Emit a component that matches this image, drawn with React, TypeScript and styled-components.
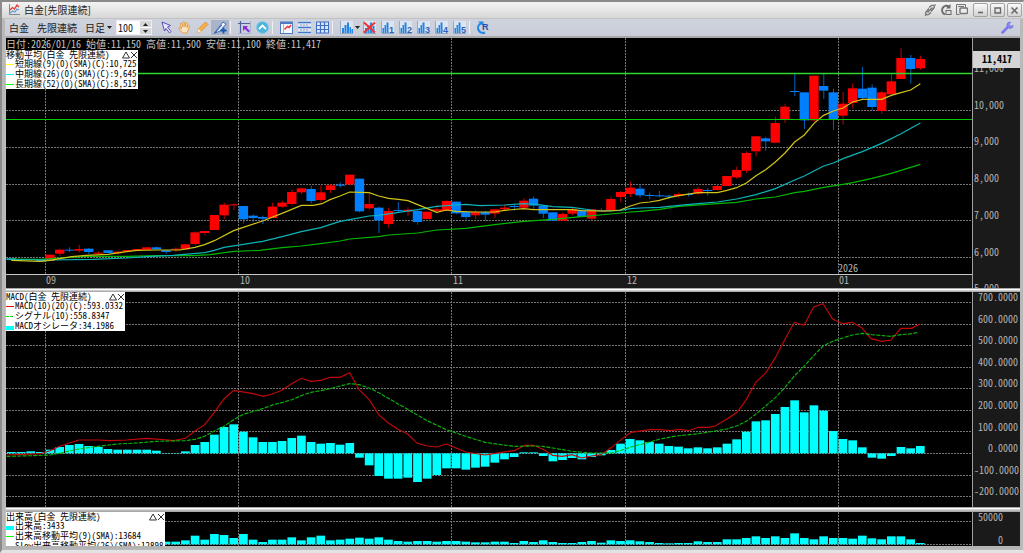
import React from 'react';
import styled, { createGlobalStyle, css } from 'styled-components';

const GlobalStyle = createGlobalStyle`
  *, *::before, *::after { box-sizing: border-box; }
  body {
    margin: 0;
    background: #e4e4e6;
    font-family: "Noto Sans CJK JP", "Liberation Sans", sans-serif;
    font-size: 10px;
    line-height: 10px;
  }
  button, input, select { font: inherit; color: inherit; margin: 0; padding: 0; border: 0; background: none; }
  svg { display: block; }
`;

/* ---------- window frame ---------- */

const Window = styled.main`
  display: flex;
  flex-direction: column;
  border-top: 2px solid #8a8a8a;
  border-left: 2px solid #8c8c8c;
  border-right: 1px solid #d4d4d4;
  border-bottom: 3px solid #e2e2e4;
  background: #b9b9b9;
  min-height: 100vh;
`;

const TitleBar = styled.header`
  display: flex;
  align-items: center;
  height: 17px;
  padding: 0 1px 0 6px;
  background: linear-gradient(#f2f2f2, #e6e6e6 50%, #d6d6d6);
  border-bottom: 1px solid #c2c2c2;
`;

const Title = styled.h1`
  margin: 0 0 0 4px;
  flex: 1;
  font-size: 10px;
  line-height: 14px;
  font-weight: 400;
  color: #1c1c1c;
`;

const TitleIcons = styled.div`
  display: flex;
  gap: 2px;
  margin-right: 4px;
`;

const FlatButton = styled.button`
  width: 14px;
  height: 14px;
  display: grid;
  place-items: center;
`;

const WindowButtons = styled.div`
  display: flex;
  gap: 2px;
`;

const WindowButton = styled.button`
  width: 15px;
  height: 14px;
  display: grid;
  place-items: center;
  border: 1px solid #a2a2a2;
  border-radius: 2px;
  background: linear-gradient(#fafafa, #d2d2d2);
`;

const ToolBar = styled.div`
  display: flex;
  align-items: center;
  height: 17px;
  margin: 0 3px;
  padding: 0 4px;
  background: linear-gradient(#cfd3dd, #c9cdd9);
  color: #202020;
`;

const ToolText = styled.span`
  margin-right: 8px;
  line-height: 14px;
`;

const PeriodBox = styled.label`
  position: relative;
  display: flex;
  align-items: center;
  width: 31px;
  svg { position: absolute; right: 4px; pointer-events: none; }
`;

const PeriodSelect = styled.select`
  width: 31px;
  height: 14px;
  line-height: 14px;
  appearance: none;
  outline: 0;
`;

const CountBox = styled.label`
  display: flex;
  width: 36px;
  height: 15px;
  margin-right: 5px;
  background: #ffffff;
  border: 1px solid #eceef2;
`;

const CountInput = styled.input`
  width: 23px;
  font-family: "Noto Sans CJK JP", sans-serif;
  font-feature-settings: "hwid";
  padding-left: 1px;
  color: #111;
  outline: 0;
`;

const Stepper = styled.span`
  display: flex;
  flex-direction: column;
  width: 11px;
  gap: 1px;
`;

const StepButton = styled.button`
  flex: 1;
  display: grid;
  place-items: center;
  background: #d6d6d6;
`;

const Divider = styled.i`
  width: 6px;
  height: 13px;
  background: linear-gradient(90deg, transparent 1px, #eef0f4 1px, #eef0f4 2px, transparent 2px);
`;

const ToolButton = styled.button<{ $pressed?: boolean }>`
  width: 18px;
  height: 15px;
  display: grid;
  place-items: center;
  ${p => p.$pressed && css`background: #a9b4c9;`}
`;

const CaretButton = styled.button`
  width: 5px;
  height: 15px;
  display: grid;
  place-items: center;
`;

const Spacer = styled.div`flex: 1;`;

/* ---------- chart panels ---------- */

const Charts = styled.div`
  display: flex;
  flex-direction: column;
  margin: 0 3px 0 3px;
  border-top: 2px solid #a8a8a8;
  border-bottom: 3px solid #b4b4b4;
  border-left: 1px solid #c0c0c0;
  border-right: 0;
`;

const Panel = styled.section`
  display: flex;
  overflow: hidden;
  background: #000;
  font-feature-settings: "hwid";
`;

const Splitter = styled.hr<{ $size: number }>`
  width: 100%;
  margin: 0;
  border: 0;
  height: ${p => p.$size}px;
  background: linear-gradient(#a8a8a8 1px, #ffffff 1px, #ffffff 2px, #dcdcdc 2px, #9c9c9c);
`;

const PlotColumn = styled.div`
  position: relative;
  flex: 1;
  min-width: 0;
`;

const Plot = styled.svg<{ $height: number }>`
  width: 100%;
  height: ${p => p.$height}px;
`;

const Axis = styled.div<{ $pad: number }>`
  position: relative;
  width: 48px;
  height: 0;
  min-height: 100%;
  padding-top: ${p => p.$pad}px;
  border-left: 1px solid #a0a0a0;
  background: #1a1a1a;
`;

const AxisCell = styled.div`
  position: relative;
  display: flex;
  background: #1a1a1a;
`;

const Scale = styled.ol<{ $height: number; $align: 'left' | 'right'; $inset: number }>`
  display: flex;
  flex-direction: column;
  margin: 0;
  padding: 0 ${p => (p.$align === 'right' ? p.$inset : 0)}px 0 1px;
  height: ${p => p.$height}px;
  list-style: none;
  text-align: ${p => p.$align};
  color: #b4b4b4;
  li { flex: 1; line-height: 10px; }
`;

const PriceTag = styled.output`
  position: absolute;
  top: 13px;
  left: 0;
  right: 0;
  height: 17px;
  line-height: 15px;
  padding-left: 9px;
  background: #d4d4d4;
  color: #000;
  font-weight: 700;
`;

const DateStrip = styled.div`
  display: grid;
  grid-template-columns: 39fr 194fr 213fr 174fr 212fr 134fr;
  height: 14px;
  border-top: 1px solid #c8c8c8;
  background: #1a1a1a;
  color: #b4b4b4;
`;

const DateCell = styled.span`
  position: relative;
  padding-left: 1px;
`;

const YearTag = styled.span`
  position: absolute;
  left: 0;
  bottom: 15px;
`;

const Quote = styled.p`
  position: absolute;
  top: 1px;
  left: 0;
  margin: 0;
  white-space: pre;
  color: #c4c4c4;
`;

const LegendBox = styled.aside<{ $top: number; $width: number }>`
  position: absolute;
  top: ${p => p.$top}px;
  left: 0;
  width: ${p => p.$width}px;
  max-height: 100%;
  overflow: hidden;
  background: #fff;
  color: #000;
  font-size: 9px;
  line-height: 10px;
  white-space: pre;
`;

const LegendRow = styled.div`
  display: flex;
  align-items: center;
  height: 10px;
  &:first-child { height: 9px; }
`;

const LegendName = styled.span`flex: 1;`;

const LegendButton = styled.button`
  width: 8px;
  height: 9px;
  display: grid;
  place-items: center;
`;

const Swatch = styled.i<{ $color: string; $kind: 'line' | 'dash' | 'bar' }>`
  width: 8px;
  margin: 1px 1px 0 0;
  flex: none;
  ${p => p.$kind === 'bar' && css`height: 4px; margin-top: 3px; background: ${p.$color};`}
  ${p => p.$kind === 'line' && css`height: 1px; background: ${p.$color};`}
  ${p => p.$kind === 'dash' && css`height: 1px; background: linear-gradient(90deg, ${p.$color} 3px, transparent 3px, transparent 4px, ${p.$color} 4px, ${p.$color} 7px, transparent 7px);`}
`;

/* ---------- data, in plot units (three units to a pixel at base size) ---------- */

const STEP = 29.01;
const FIRST = 16;
const WIDTH = 2898;
const MONTHS = [118.5, 697.5, 1336.5, 1858.5, 2497.5];

// colour, body top, body bottom, wick top, wick bottom
type Candle = [string, number, number, number?, number?];

const lowerCandles: Candle[] = [
  ['b', 294, 300], ['b', 298, 301], ['r', 297, 300], ['b', 298, 305], ['r', 284, 303],
  ['r', 269, 281, 266, 288], ['b', 269, 272, 262, 276], ['r', 267, 272, 255, 277], ['b', 266, 276, 264, 282],
  ['r', 278, 281, 275, 284], ['b', 271, 279], ['r', 275, 280, 273, 284], ['r', 270, 275], ['r', 267, 270],
  ['r', 262, 269], ['b', 262, 268, 260, 270], ['b', 271, 276, 270, 281], ['r', 266, 269, 262, 276],
  ['r', 253, 268, 251, 268], ['r', 217, 252, 214, 256], ['r', 213, 219, 213, 226], ['r', 165, 210],
  ['r', 134, 166, 128, 178], ['r', 133, 136, 130, 150], ['b', 138, 178, 138, 190], ['b', 167, 174, 163, 186],
  ['b', 171, 176, 167, 192], ['r', 140, 174, 128, 174], ['r', 128, 140, 122, 143], ['r', 96, 132, 88, 136],
  ['r', 85, 97, 83, 103], ['b', 87, 123, 78, 130], ['r', 97, 120, 76, 127], ['r', 76, 90, 72, 99],
  ['b', 74, 77, 67, 83], ['r', 44, 73, 44, 77], ['b', 56, 154, 56, 157], ['r', 132, 145, 102, 149],
  ['b', 143, 181, 140, 219], ['r', 153, 192, 143, 203], ['b', 150, 153, 126, 158], ['r', 149, 155, 142, 168],
  ['b', 153, 186, 150, 194], ['r', 155, 177], ['r', 148, 153, 136, 160], ['r', 123, 153, 121, 153],
  ['b', 125, 160, 125, 163], ['b', 156, 171, 152, 179], ['r', 156, 166, 150, 177], ['b', 156, 164, 153, 183],
  ['r', 148, 161, 148, 174], ['r', 143, 148, 135, 152], ['b', 138, 141, 131, 152], ['r', 122, 143, 114, 148],
  ['b', 116, 137, 109, 150], ['b', 137, 161, 137, 174], ['b', 157, 182], ['r', 162, 182, 158, 182],
  ['r', 147, 161, 142, 166], ['b', 151, 171, 148, 171], ['r', 148, 176, 148, 182], ['r', 151, 154, 144, 156],
  ['r', 117, 153, 110, 153], ['r', 96, 111, 93, 126], ['r', 83, 102, 65, 111], ['b', 86, 106, 75, 113],
  ['b', 105, 108, 98, 118],
];

const upperCandles: Candle[] = [
  ['b', 466, 469, 452, 472], ['b', 467, 470, 464, 477], ['r', 462, 468, 458, 473], ['b', 462, 465, 458, 470],
  ['r', 447, 461, 440, 464], ['b', 450, 453, 445, 467], ['r', 438, 450, 432, 452], ['r', 408, 438],
  ['r', 390, 412, 380, 416], ['r', 339, 392, 334, 399], ['r', 289, 334, 289, 349], ['b', 295, 304, 291, 332],
  ['r', 249, 308, 230, 308], ['r', 200, 238, 191, 249], ['b', 153, 156, 102, 168], ['b', 157, 241, 157, 267],
  ['r', 107, 241, 107, 245], ['b', 138, 152, 102, 177], ['b', 157, 238, 146, 270], ['r', 191, 227, 156, 254],
  ['r', 145, 189, 130, 206], ['b', 146, 174, 81, 178], ['b', 143, 201, 133, 211], ['r', 157, 213, 153, 221],
  ['r', 124, 163, 102, 163], ['r', 54, 117, 25, 117], ['b', 54, 87, 45, 131], ['r', 57, 85, 47, 90],
];

const shiftCandles = (rows: Candle[], dy: number) =>
  rows.map(([k, t, b, h = t, l = b]) => ({ up: k === 'r', top: t + dy, bottom: b + dy, high: h + dy, low: l + dy }));

const candles = [...shiftCandles(lowerCandles, 366), ...shiftCandles(upperCandles, 6)];

// A line is a run of "x,y" points; each run has its own origin.
const run = (dx: number, dy: number, text: string) =>
  text.split(' ').map(pair => {
    const [x, y] = pair.split(',').map(Number);
    return `${x + dx},${y + dy}`;
  }).join(' ');

const shortAverage = [
  run(-18, 366, '34,301 121,304 150,301 179,296 215,290 260,286 324,283 380,275 411,271 469,270 540,270 585,262 614,254 643,242 701,212 730,202 788,183 846,160 904,136 940,136 966,131'),
  run(942, 366, '30,119 60,108 89,96 118,97 147,98 176,108 206,115 235,118 264,122 293,134 321,145 350,157 379,150 408,154 466,156 524,156 553,151 611,146 640,149 756,149 785,152 843,153 872,153 901,150 931,138 960,129'),
  run(1902, 6, '29,486 58,481 87,473 116,467 174,458 232,458 261,451 290,443 319,429 348,407 377,389 406,366 435,339 464,306 493,285 522,250 551,226 580,213 609,204 638,186 667,178 725,178 754,166 783,158 812,150 841,131'),
].join(' ');

const middleAverage = [
  run(-18, 366, '20,298 150,300 280,298 380,294 440,290 520,286 614,278 643,271 672,262 730,253 788,244 846,230 904,215 962,203'),
  run(942, 366, '60,184 89,179 147,168 176,166 235,157 293,149 350,139 408,135 437,133 480,137 553,135 611,131 650,133 698,140 756,142 814,150 843,153 901,151 931,146'),
  run(1902, 6, '0,504 60,502 116,496 174,491 232,486 290,477 348,464 406,446 464,420 493,408 551,378 580,369 609,356 667,335 725,310 783,281 841,249'),
].join(' ');

const longAverage = [
  run(-18, 366, '20,297 121,298 179,294 260,289 380,289 469,287 580,287 630,284 701,274 780,271 846,263 904,258 962,251'),
  run(942, 366, '60,243 89,237 176,230 206,225 293,219 350,210 437,205 524,194 611,184 698,178 785,170 872,162 931,156'),
  run(1902, 6, '0,514 60,508 116,499 232,491 290,487 348,477 406,471 464,458 493,454 551,442 609,433 638,428 696,415 754,400 812,382 841,373'),
].join(' ');

const macdLine = [
  run(-18, 204, '20,285 70,283 121,281 150,272 179,259 208,249 237,240 295,240 330,242 380,240 440,235 490,239 520,242 556,235 585,213 614,194 643,157 672,117 701,91 759,101 790,109 817,102 846,91 875,71 904,55 933,64 962,61 991,52 1020,52 1049,38 1078,90 1107,118 1136,164 1165,189 1194,208 1223,222 1252,250 1281,258 1310,261 1339,252 1368,264 1397,276 1455,285 1500,278'),
  run(1482, -6, '45,481 75,466 100,466 129,478 158,496 187,499 216,494 245,504 274,498 303,494 335,472 364,448 393,427 450,419 480,419 510,422 540,418 565,422 595,412 625,412 645,408 680,388 712,366 739,328 768,276 797,249 826,203 855,148 883,97 912,106 941,51 969,41 998,87 1028,101 1057,97 1086,114 1113,146 1146,154 1173,150 1202,115 1235,115 1259,102'),
].join(' ');

const signalLine = [
  run(-18, 204, '20,289 100,287 150,285 179,280 208,273 237,267 295,259 353,252 411,249 469,244 556,242 585,238 614,229 643,213 672,199 701,179 730,163 788,146 820,134 846,128 875,119 904,107 933,97 962,92 991,86 1020,78 1049,71 1078,74 1107,84 1136,98 1165,115 1223,148 1281,182 1339,209 1397,229 1455,247 1510,255'),
  run(1482, -6, '45,469 100,468 129,469 158,474 216,484 274,489 335,489 364,481 393,471 450,456 480,447 530,438 595,431 645,423 680,417 712,407 739,394 768,372 797,348 826,323 855,292 883,258 912,229 941,197 969,168 998,154 1028,144 1057,135 1086,130 1115,134 1173,139 1202,134 1230,132 1255,127'),
].join(' ');

const oscillator = [
  4, 4, 6, 4, 11, 19, 25, 28, 22, 19, 13, 11, 11, 11, 11, 8, 1, 1, 6, 25, 34, 56, 79, 87, 65, 48, 34, 34, 37, 46, 53,
  34, 29, 31, 26, 31, -13, -36, -68, -76, -76, -73, -86, -76, -65, -45, -45, -49, -43, -40, -28, -18, -11, 3, 3, -8,
  -24, -20, -14, -18, -11, -6, 10, 29, 43, 39, 34, 29, 22, 20, 15, 18, 15, 18, 29, 42, 65, 96, 99, 118, 139, 159, 123,
  144, 128, 67, 43, 39, 18, -13, -16, -8, 19, 15, 22,
];

const VOLUME_START = 16;
const volumes = [
  8, 8, 12, 26, 14, 31, 28, 19, 31, 14, 7, 14, 14, 21, 12, 21, 26, 12, 14, 17, 20, 17, 21, 14, 10, 8, 10, 10, 8, 10, 10,
  8, 6, 6, 8, 8, 4, 10, 7, 12, 7, 4, 4, 7, 10, 5, 12, 10, 12, 9, 7, 4, 3, 4, 4, 9, 7, 7, 15, 15, 19, 24, 19, 24, 19, 33,
  19, 15, 24, 19, 19, 17, 26, 18, 15, 24, 24, 15, 4,
];

/* ---------- drawings ---------- */

const Grid = ({ rows, height }: { rows: number[]; height: number }) => (
  <g stroke="#747474" strokeWidth={3} strokeDasharray="6 3">
    {rows.map(y => <line key={y} x1={0} x2={WIDTH} y1={y} y2={y} />)}
    {MONTHS.map(x => <line key={x} x1={x} x2={x} y1={0} y2={height} />)}
  </g>
);

const Bars = ({ values, base, start = 0 }: { values: number[]; base: number; start?: number }) => (
  <g fill="#00ffff">
    {values.map((v, i) => (
      <rect
        key={i}
        x={FIRST + (i + start) * STEP - 13}
        y={v > 0 ? base - v : base}
        width={26}
        height={Math.abs(v)}
      />
    ))}
  </g>
);

const priceRows = [106.5, 217.5, 328.5, 439.5, 547.5, 658.5];
const macdRows = [31.5, 97.5, 160.5, 226.5, 289.5, 355.5, 418.5, 484.5, 550.5, 613.5];

const BarsIcon = ({ mark }: { mark?: string }) => (
  <svg width="15" height="13" viewBox="0 0 15 13">
    <rect x="1" y="0" width="13" height="13" fill="#dde4ee" />
    <path d="M1.500 0v12.500H14" stroke="#9aa6ba" fill="none" />
    {(!mark || mark === 'x') && <path d="M3 12V7h2v5zM5.500 12V4h2v8zM8 12V1.500h2V12z" fill="#1f86e8" />}
    {!mark && <path d="M10.500 12V6H12v6zM12.500 12V8h1.500v4z" fill="#1f86e8" />}
    {mark === 'x' && (
      <>
        <path d="M10.500 12V5h2v7z" fill="#1f86e8" />
        <path d="M2 1.500l11 10M13 1.500l-11 10" stroke="#ee3434" strokeWidth="2" fill="none" />
      </>
    )}
    {mark && mark !== 'x' && (
      <>
        <path d="M2.500 12V7H4v5zM4.500 12V4H6v8zM6.500 12V1.500h2V12z" fill="#1f86e8" />
        <text x="9" y="12" fontSize="9" fontWeight="700" fontFamily="Liberation Sans" fill="#2a5fc0">{mark}</text>
      </>
    )}
  </svg>
);

const Caret = () => <svg width="5" height="3" viewBox="0 0 5 3"><path d="M0 0h5L2.500 3z" fill="#222" /></svg>;

const pencil = (
  <>
    <path d="M1 12l1.500-4L9.500 1 12 3.500 5 10.500z" fill="#f6b04a" stroke="#d88a28" strokeWidth=".8" />
    <path d="M1 12l1.500-4L5 10.500z" fill="#fff0d4" />
  </>
);

const Icon = ({ children }: { children: React.ReactNode }) => (
  <svg width="13" height="13" viewBox="0 0 13 13" fill="none">{children}</svg>
);

interface LegendItem { color: string; kind: 'line' | 'dash' | 'bar'; text: string }

const Legend = ({ top, width, name, items }: { top: number; width: number; name: string; items: LegendItem[] }) => (
  <LegendBox $top={top} $width={width}>
    <LegendRow>
      <LegendName>{name}</LegendName>
      <LegendButton aria-label="最小化">
        <svg width="8" height="8" viewBox="0 0 8 8"><path d="M.5 7L4 1l3.500 6z" fill="none" stroke="#333" /></svg>
      </LegendButton>
      <LegendButton aria-label="閉じる">
        <svg width="8" height="8" viewBox="0 0 8 8"><path d="M1 1l6 6M7 1L1 7" stroke="#333" /></svg>
      </LegendButton>
    </LegendRow>
    {items.map(item => (
      <LegendRow key={item.text}>
        <Swatch $color={item.color} $kind={item.kind} />
        {item.text}
      </LegendRow>
    ))}
  </LegendBox>
);

/* ---------- page ---------- */

export default function App() {
  return (
    <Window>
      <GlobalStyle />
      <TitleBar>
        <svg width="12" height="12" viewBox="0 0 12 12" fill="none">
          <path d="M1.500 0v10.500H12" stroke="#7d8a96" />
          <path d="M2 6l2.500-2.500L6.500 5 9 1l2 2" stroke="#e23b3b" strokeWidth="1.300" />
          <path d="M2 9l2.500-2L7 8l2-3 2 1" stroke="#5aa0dc" strokeWidth="1.200" />
        </svg>
        <Title>白金[先限連続]</Title>
        <TitleIcons>
          <FlatButton aria-label="リンク">
            <svg width="12" height="12" viewBox="0 0 12 12" fill="none" stroke="#707070" strokeWidth="1.300">
              <path d="M5 3.500L7.500 1.500c1.500-1 3.500.5 2.500 2.500L7 7.500M7 8.500l-2.500 2C3 11.500 1 10 2 8l3-3.500M3.500 8.500l5-5M1 11.500l1-1M11.500.5l-1 1" />
            </svg>
          </FlatButton>
          <FlatButton aria-label="更新">
            <svg width="12" height="12" viewBox="0 0 12 12" fill="none" stroke="#686868">
              <path d="M5 10.500A4.500 4.500 0 1 1 9 2.500" strokeWidth="1.800" />
              <path d="M10.500 0v4.500H6z" fill="#686868" stroke="none" />
              <rect x="6" y="6.500" width="5" height="4" />
            </svg>
          </FlatButton>
          <FlatButton aria-label="複製">
            <svg width="12" height="12" viewBox="0 0 12 12" fill="none" stroke="#757575">
              <path d="M3.500 10.500h-3V.5h9v3" />
              <path d="M2 2.500h6" />
              <rect x="4" y="4" width="7.500" height="5.500" rx="1" strokeWidth="1.400" fill="#eee" />
            </svg>
          </FlatButton>
        </TitleIcons>
        <WindowButtons>
          <WindowButton aria-label="最小化">
            <svg width="9" height="9" viewBox="0 0 9 9"><path d="M2 6.500h5" stroke="#666" strokeWidth="1.600" /></svg>
          </WindowButton>
          <WindowButton aria-label="最大化">
            <svg width="9" height="9" viewBox="0 0 9 9"><path d="M2 2h5.500v5H2z" stroke="#666" strokeWidth="1.300" fill="none" /></svg>
          </WindowButton>
          <WindowButton aria-label="閉じる">
            <svg width="9" height="9" viewBox="0 0 9 9"><path d="M1.500 1.500l6 6M7.500 1.500l-6 6" stroke="#666" strokeWidth="1.500" /></svg>
          </WindowButton>
        </WindowButtons>
      </TitleBar>

      <ToolBar role="toolbar" aria-label="チャート">
        <ToolText>白金</ToolText>
        <ToolText>先限連続</ToolText>
        <PeriodBox>
          <PeriodSelect aria-label="足種" defaultValue="日足"><option>日足</option></PeriodSelect>
          <Caret />
        </PeriodBox>
        <CountBox>
          <CountInput aria-label="本数" defaultValue="100" />
          <Stepper>
            <StepButton aria-label="増やす"><svg width="5" height="3" viewBox="0 0 5 3"><path d="M0 3h5L2.500 0z" fill="#222" /></svg></StepButton>
            <StepButton aria-label="減らす"><Caret /></StepButton>
          </Stepper>
        </CountBox>

        <ToolButton aria-label="選択">
          <Icon><path d="M2 1l8.500 3.500-3 1.500 3.500 4.500-1.500 1.500L6 7.500 4.500 10z" fill="#e8e4fb" stroke="#5a4fb8" /></Icon>
        </ToolButton>
        <ToolButton aria-label="移動">
          <Icon><path d="M4.500 12L1 7.500c-.5-1 .7-1.500 1.300-.8L3.500 8 2.500 3c0-1 1.200-1.200 1.500-.2L5 6V1.500c0-1 1.400-1 1.500 0L7 6l1-4c.3-1 1.600-.6 1.400.4L9 6.500l1.200-2c.6-.8 1.600-.2 1.300.7L10 9.500 9 12z" fill="#fbe3bd" stroke="#e09a38" strokeWidth=".9" /></Icon>
        </ToolButton>
        <ToolButton aria-label="描画"><Icon>{pencil}</Icon></ToolButton>
        <ToolButton aria-label="ライン描画" $pressed>
          <Icon>
            <path d="M0 12.500L9 1l3 2-6 7z" fill="#f3f6fb" stroke="#2f63b4" strokeWidth=".9" />
            <path d="M1 12l7-8" stroke="#2f63b4" />
            <path d="M9.500 6.500v6M6.500 9.500h6" stroke="#1554b8" strokeWidth="1.800" />
          </Icon>
        </ToolButton>
        <Divider />
        <ToolButton aria-label="クロスライン">
          <Icon>
            <path d="M0 2.500h13M2.500 0v13" stroke="#5560a0" strokeWidth="1.200" />
            <path d="M5 5h5L8.500 6.500l3.500 3.500-1.500 1.500L7 8 5 10z" fill="#8a2be0" />
            <path d="M12.500 0v13M0 12.500h13" stroke="#a9b2cc" />
          </Icon>
        </ToolButton>
        <ToolButton aria-label="上へ">
          <Icon>
            <circle cx="6.500" cy="6.500" r="6" fill="#4fb4dc" stroke="#86cbe6" />
            <path d="M3 8l3.500-3.500L10 8" stroke="#fff" strokeWidth="1.800" />
          </Icon>
        </ToolButton>
        <Divider />
        <ToolButton aria-label="チャート設定">
          <Icon>
            <rect x=".5" y="1" width="12" height="11.500" fill="#f6f9fd" stroke="#4e7cc4" />
            <path d="M.5 2h12" stroke="#4e7cc4" strokeWidth="2" />
            <path d="M4.500 8.500l3-3 1.500 1 2-2.500" stroke="#ee3434" strokeWidth="1.400" />
            <path d="M3.500 3v9" stroke="#9db6dc" />
          </Icon>
        </ToolButton>
        <ToolButton aria-label="横罫線">
          <Icon>
            <rect x="0" y="0" width="13" height="13" fill="#e3e9f3" />
            <path d="M0 1.500h13M0 6.500h13M0 11.500h13" stroke="#3f77cc" strokeWidth="1.400" />
            <path d="M2 4h9M2 9h9" stroke="#8e9cb4" strokeDasharray="2 1" />
          </Icon>
        </ToolButton>
        <ToolButton aria-label="縦横罫線">
          <Icon>
            <rect x=".5" y="1" width="12" height="11" fill="#dfe7f4" stroke="#3f6fc0" />
            <path d="M0 4.500h13M0 8.500h13M4.500 1v11M8.500 1v11" stroke="#3f6fc0" strokeWidth="1.200" />
          </Icon>
        </ToolButton>
        <Divider />
        <ToolButton aria-label="テクニカル"><BarsIcon /></ToolButton>
        <CaretButton aria-label="テクニカル一覧"><Caret /></CaretButton>
        <ToolButton aria-label="テクニカル削除"><BarsIcon mark="x" /></ToolButton>
        {['1', '2', '3', '4', '5'].map(n => (
          <ToolButton key={n} aria-label={`テクニカル${n}`}><BarsIcon mark={n} /></ToolButton>
        ))}
        <Divider />
        <ToolButton aria-label="リセット">
          <Icon>
            <path d="M4 2.500A4.800 4.800 0 1 0 8 11.500" stroke="#1f86e8" strokeWidth="2" />
            <path d="M1 .5h5.500V5z" fill="#1f86e8" />
            <text x="5" y="9" fontSize="9" fontWeight="700" fontFamily="Liberation Sans" fill="#1c4fae">R</text>
          </Icon>
        </ToolButton>
        <Spacer />
        <ToolButton aria-label="設定">
          <Icon>
            <path d="M1.500 11.500l5-5" stroke="#7c78ee" strokeWidth="2.600" strokeLinecap="round" />
            <path d="M9.500 1A3.200 3.200 0 1 0 12.200 4.500L9.800 5.200 8 4z" fill="#8a86f4" stroke="#6a66e0" strokeWidth=".6" />
          </Icon>
        </ToolButton>
      </ToolBar>

      <Charts>
        <Panel>
          <PlotColumn>
            <Plot $height={236} viewBox="0 0 2898 708" preserveAspectRatio="none">
              <Grid rows={priceRows} height={708} />
              {candles.map((c, i) => {
                const x = FIRST + i * STEP;
                return (
                  <g key={i} fill={c.up ? '#ff0000' : '#0080ff'}>
                    <rect x={x - 1} y={c.high} width={3} height={c.low - c.high} opacity={0.75} />
                    <rect x={x - 14} y={c.top} width={28} height={Math.max(3, c.bottom - c.top)} />
                  </g>
                );
              })}
              <g fill="none" strokeWidth={3.6}>
                <polyline points={longAverage} stroke="#00b800" />
                <polyline points={middleAverage} stroke="#0cb4b8" />
                <polyline points={shortAverage} stroke="#d0c416" />
              </g>
              <g>
                <line x1={0} x2={WIDTH} y1={106.5} y2={106.5} strokeWidth={4} stroke="#2fd82f" />
                <line x1={0} x2={WIDTH} y1={244.5} y2={244.5} strokeWidth={3} stroke="#00c800" />
              </g>
            </Plot>
            <Quote>日付:2026/01/16 始値:11,150 高値:11,500 安値:11,100 終値:11,417</Quote>
            <Legend
              top={12}
              width={132}
              name="移動平均(白金 先限連続)"
              items={[
                { color: '#ffff00', kind: 'line', text: '短期線(9)(0)(SMA)(C):10,725' },
                { color: '#00ffff', kind: 'line', text: '中期線(26)(0)(SMA)(C):9,645' },
                { color: '#00ff00', kind: 'line', text: '長期線(52)(0)(SMA)(C):8,519' },
              ]}
            />
            <DateStrip>
              <DateCell />
              <DateCell>09</DateCell>
              <DateCell>10</DateCell>
              <DateCell>11</DateCell>
              <DateCell>12</DateCell>
              <DateCell><YearTag>2026</YearTag>01</DateCell>
            </DateStrip>
          </PlotColumn>
          <AxisCell>
            <Axis $pad={25}>
              <Scale $height={257} $align="left" $inset={0}>
                {['11,000', '10,000', '9,000', '8,000', '7,000', '6,000', '5,000'].map(t => <li key={t}>{t}</li>)}
              </Scale>
              <PriceTag>11,417</PriceTag>
            </Axis>
          </AxisCell>
        </Panel>

        <Splitter $size={4} />

        <Panel>
          <PlotColumn>
            <Plot $height={215} viewBox="0 0 2898 645" preserveAspectRatio="none">
              <Grid rows={macdRows} height={645} />
              <Bars values={oscillator} base={484} />
              <g fill="none" strokeWidth={3.4}>
                <polyline points={macdLine} stroke="#c40808" />
                <polyline points={signalLine} stroke="#08b808" strokeDasharray="12 4" />
              </g>
            </Plot>
            <Legend
              top={0}
              width={119}
              name="MACD(白金 先限連続)"
              items={[
                { color: '#ff0000', kind: 'line', text: 'MACD(10)(20)(C):593.0332' },
                { color: '#00e000', kind: 'dash', text: 'シグナル(10):558.8347' },
                { color: '#00ffff', kind: 'bar', text: 'MACDオシレータ:34.1986' },
              ]}
            />
          </PlotColumn>
          <AxisCell>
            <Axis $pad={0}>
              <Scale $height={216} $align="right" $inset={2}>
                {['700.0000', '600.0000', '500.0000', '400.0000', '300.0000', '200.0000', '100.0000', '0.0000', '-100.0000', '-200.0000'].map(t => (
                  <li key={t}>{t}</li>
                ))}
              </Scale>
            </Axis>
          </AxisCell>
        </Panel>

        <Splitter $size={5} />

        <Panel>
          <PlotColumn>
            <Plot $height={34} viewBox="0 0 2898 102" preserveAspectRatio="none">
              <Grid rows={[28.5, 97.5]} height={102} />
              <Bars values={volumes} base={97} start={VOLUME_START} />
            </Plot>
            <Legend
              top={0}
              width={159}
              name="出来高(白金 先限連続)"
              items={[
                { color: '#00ffff', kind: 'bar', text: '出来高:3433' },
                { color: '#00ff00', kind: 'line', text: '出来高移動平均(9)(SMA):13684' },
                { color: '#ff40ff', kind: 'line', text: 'Slow出来高移動平均(26)(SMA):12898' },
              ]}
            />
          </PlotColumn>
          <AxisCell>
            <Axis $pad={0}>
              <Scale $height={46} $align="right" $inset={17}>
                <li>50000</li>
                <li>0</li>
              </Scale>
            </Axis>
          </AxisCell>
        </Panel>
      </Charts>
    </Window>
  );
}
